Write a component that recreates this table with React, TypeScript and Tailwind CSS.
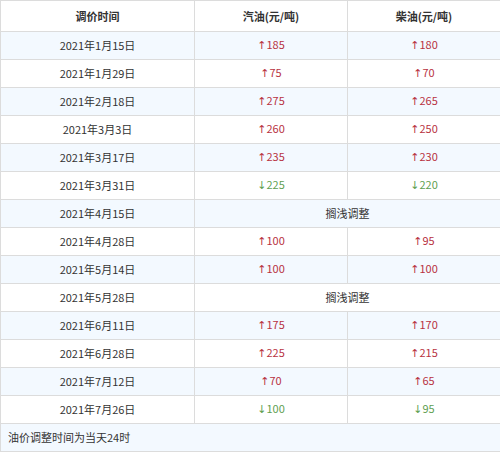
import React from "react";

type Row = { date: string; g?: [string, number]; d?: [string, number]; note?: string };

const rows: Row[] = [
  { date: "2021年1月15日", g: ["up", 185], d: ["up", 180] },
  { date: "2021年1月29日", g: ["up", 75], d: ["up", 70] },
  { date: "2021年2月18日", g: ["up", 275], d: ["up", 265] },
  { date: "2021年3月3日", g: ["up", 260], d: ["up", 250] },
  { date: "2021年3月17日", g: ["up", 235], d: ["up", 230] },
  { date: "2021年3月31日", g: ["down", 225], d: ["down", 220] },
  { date: "2021年4月15日", note: "搁浅调整" },
  { date: "2021年4月28日", g: ["up", 100], d: ["up", 95] },
  { date: "2021年5月14日", g: ["up", 100], d: ["up", 100] },
  { date: "2021年5月28日", note: "搁浅调整" },
  { date: "2021年6月11日", g: ["up", 175], d: ["up", 170] },
  { date: "2021年6月28日", g: ["up", 225], d: ["up", 215] },
  { date: "2021年7月12日", g: ["up", 70], d: ["up", 65] },
  { date: "2021年7月26日", g: ["down", 100], d: ["down", 95] },
];

function Val({ v }: { v: [string, number] }) {
  const up = v[0] === "up";
  return (
    <span className={up ? "text-[#b8323f]" : "text-[#5f9f52]"}>
      <span className="font-['DejaVu_Sans',sans-serif] text-[11px]">{up ? "↑" : "↓"}</span>
      {v[1]}
    </span>
  );
}

export default function App() {
  return (
    <div className="w-[500px] h-[453px] bg-white overflow-hidden font-['Noto_Sans_CJK_SC','Noto_Sans',sans-serif] text-[11px] text-[#333]">
      <table className="w-[500px] border-collapse table-fixed">
        <colgroup>
          <col className="w-[194px]" />
          <col className="w-[153px]" />
          <col className="w-[153px]" />
        </colgroup>
        <thead>
          <tr className="h-[31px] bg-white">
            <th className="border border-[#dcdcdc] font-bold text-center">调价时间</th>
            <th className="border border-[#dcdcdc] font-bold text-center">汽油(元/吨)</th>
            <th className="border border-[#dcdcdc] font-bold text-center">柴油(元/吨)</th>
          </tr>
        </thead>
        <tbody>
          {rows.map((r, i) => (
            <tr key={i} className={`h-[28px] ${i % 2 === 0 ? "bg-[#f3f9ff]" : "bg-white"}`}>
              <td className="border border-[#dcdcdc] text-center p-0">{r.date}</td>
              {r.note ? (
                <td colSpan={2} className="border border-[#dcdcdc] text-center p-0">
                  {r.note}
                </td>
              ) : (
                <>
                  <td className="border border-[#dcdcdc] text-center p-0">
                    <Val v={r.g!} />
                  </td>
                  <td className="border border-[#dcdcdc] text-center p-0">
                    <Val v={r.d!} />
                  </td>
                </>
              )}
            </tr>
          ))}
          <tr className="h-[28px] bg-[#f3f9ff]">
            <td colSpan={3} className="border border-[#dcdcdc] text-left pl-[7px] p-0">
              油价调整时间为当天24时
            </td>
          </tr>
        </tbody>
      </table>
    </div>
  );
}
